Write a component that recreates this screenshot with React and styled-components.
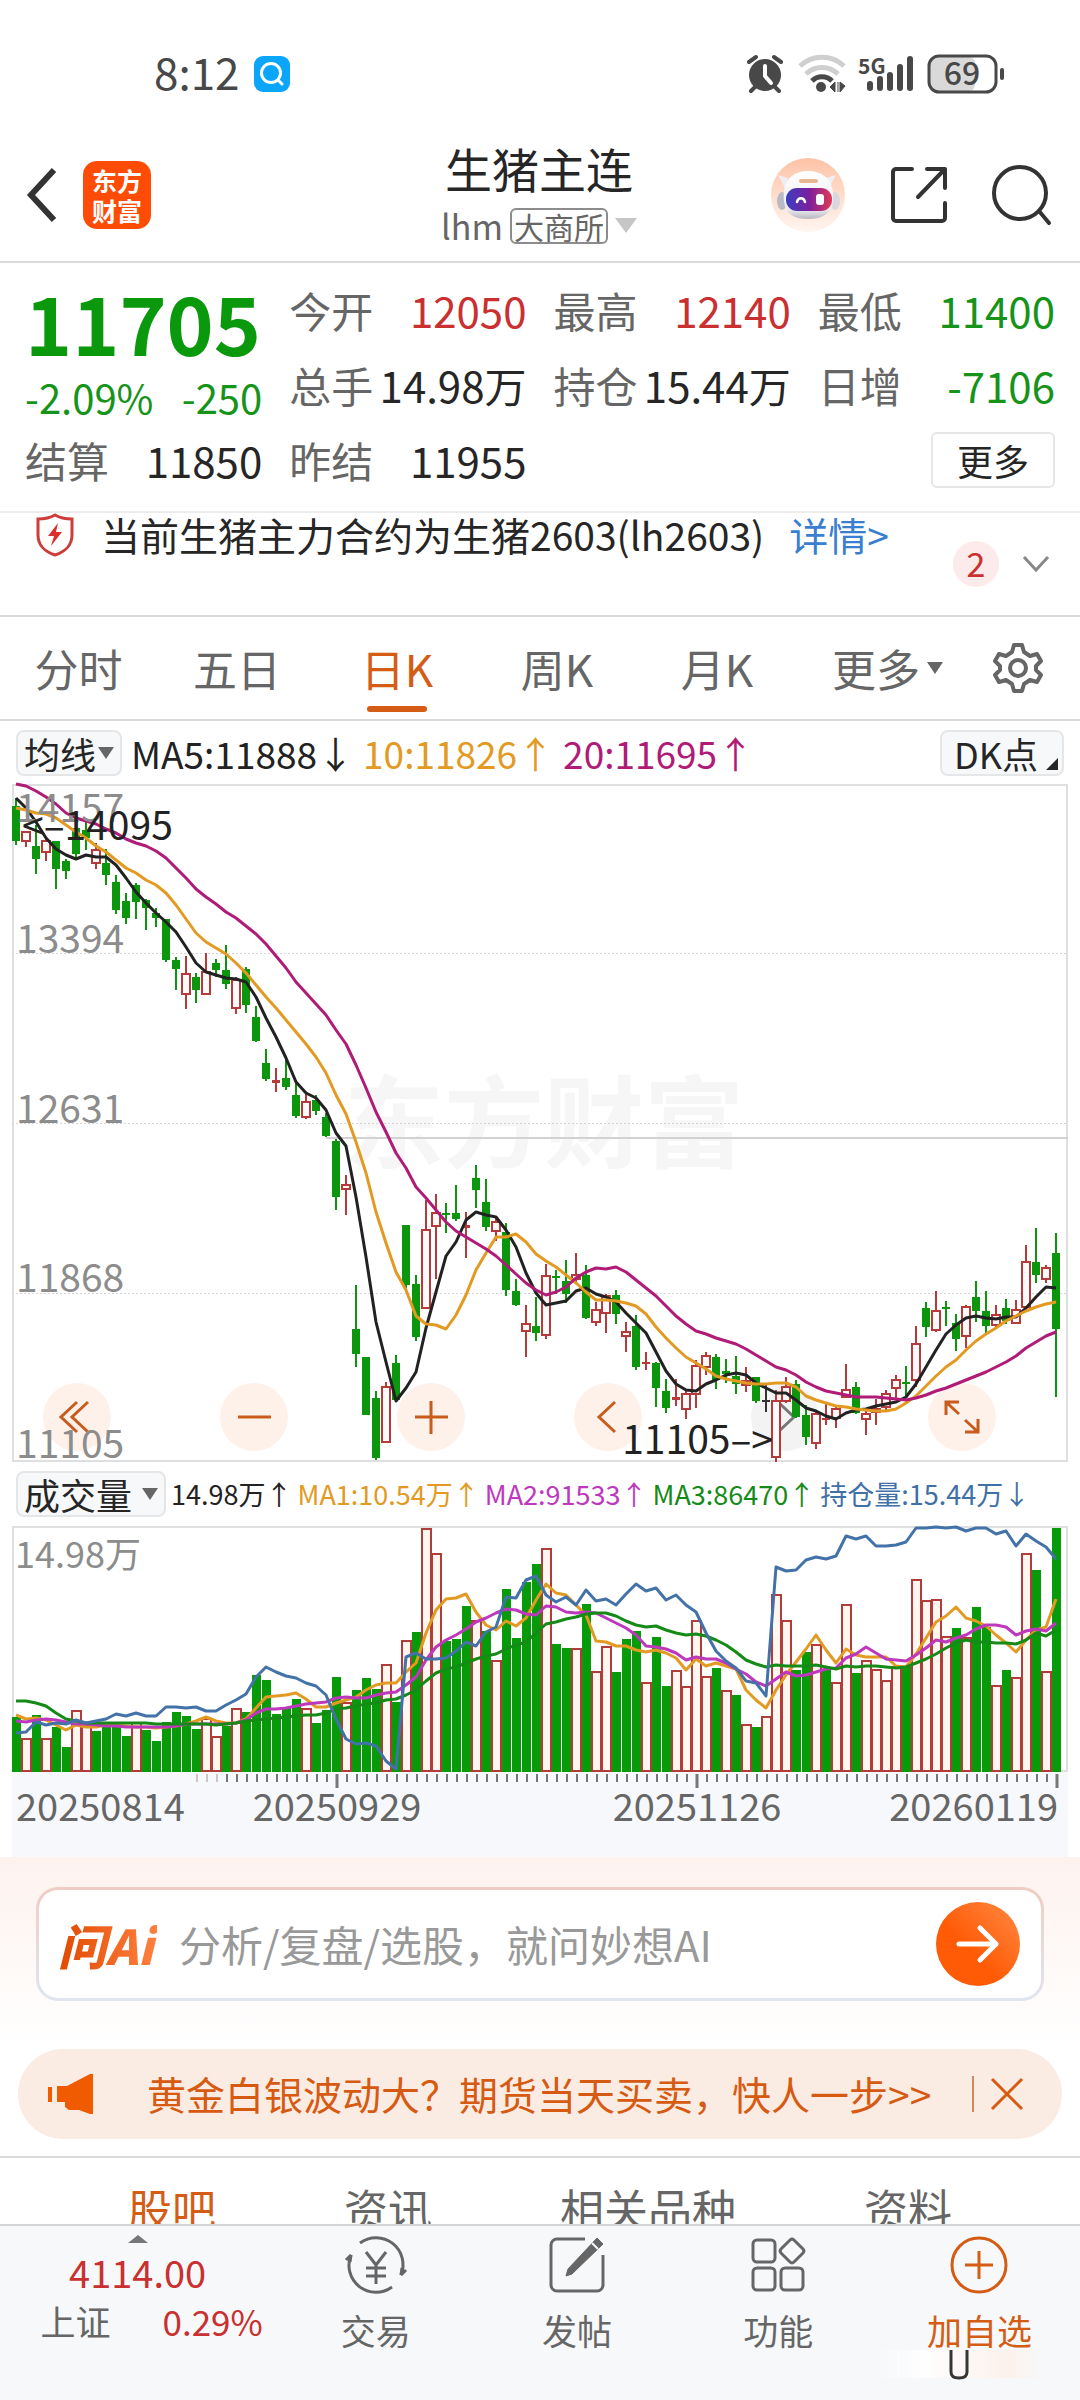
import styled, { createGlobalStyle, css } from 'styled-components';

const GlobalStyle = createGlobalStyle`
  * {
    box-sizing: border-box;
  }

  body {
    margin: 0;
    background: #fff;
    color: #262626;
    font-family: 'Noto Sans CJK SC', 'Noto Sans', sans-serif;
  }

  button {
    padding: 0;
    border: 0;
    background: none;
    color: inherit;
    font: inherit;
    cursor: pointer;
  }

  a {
    color: inherit;
    text-decoration: none;
  }

  svg {
    display: block;
    flex: none;
    overflow: visible;
  }
`;

const colors = {
  up: '#c9302f',
  down: '#16941a',
  text: '#262626',
  muted: '#666',
  orange: '#d55c14',
  line: '#d9dadb',
  soft: '#f6f8fa',
};

const tones = {
  up: colors.up,
  down: colors.down,
  text: colors.text,
};

/* ---------- chart data ---------- */

// [direction, high, body top, body bottom, low], in chart units from the top
const candles = [
  ['g', 14, 22, 57, 61], ['r', 47, 47, 57, 63], ['g', 41, 62, 75, 90], ['r', 53, 56, 68, 77],
  ['g', 57, 57, 85, 105], ['g', 75, 77, 87, 95], ['g', 36, 44, 70, 74], ['g', 36, 46, 54, 66],
  ['r', 59, 65, 79, 85], ['g', 65, 79, 91, 101], ['g', 91, 98, 126, 130], ['g', 109, 117, 134, 140],
  ['g', 99, 101, 118, 135], ['g', 115, 116, 124, 146], ['g', 124, 129, 134, 143], ['g', 135, 135, 176, 178],
  ['g', 173, 176, 185, 206], ['r', 172, 189, 210, 225], ['g', 189, 193, 206, 219], ['r', 169, 187, 210, 210],
  ['g', 175, 179, 186, 193], ['g', 161, 186, 200, 205], ['r', 193, 195, 224, 230], ['g', 183, 185, 221, 229],
  ['g', 222, 233, 257, 258], ['g', 265, 279, 295, 297], ['r', 284, 296, 299, 308], ['g', 276, 294, 303, 306],
  ['g', 296, 311, 332, 334], ['r', 309, 317, 333, 335], ['g', 311, 316, 327, 331], ['g', 329, 333, 352, 353],
  ['g', 355, 357, 413, 426], ['r', 391, 400, 405, 431], ['g', 501, 545, 570, 583], ['g', 573, 573, 631, 631],
  ['g', 607, 614, 674, 676], ['r', 598, 602, 658, 658], ['g', 571, 579, 616, 618], ['g', 441, 441, 501, 504],
  ['g', 491, 500, 553, 557], ['r', 416, 445, 524, 524], ['r', 410, 428, 442, 495], ['g', 419, 429, 431, 449],
  ['g', 401, 429, 435, 437], ['r', 428, 441, 444, 474], ['g', 381, 394, 406, 424], ['g', 395, 418, 443, 447],
  ['r', 433, 437, 447, 457], ['g', 439, 448, 506, 512], ['g', 495, 507, 521, 522], ['r', 521, 539, 547, 573],
  ['g', 513, 542, 549, 557], ['r', 480, 491, 551, 555], ['g', 486, 492, 493, 510], ['g', 476, 497, 510, 519],
  ['r', 469, 490, 495, 498], ['g', 481, 491, 534, 535], ['r', 518, 525, 538, 542], ['r', 510, 511, 529, 549],
  ['g', 506, 511, 530, 540], ['r', 538, 547, 552, 568], ['g', 531, 542, 583, 586], ['r', 568, 578, 580, 586],
  ['g', 578, 579, 604, 623], ['g', 595, 607, 624, 629], ['r', 595, 613, 616, 622], ['r', 605, 609, 625, 635],
  ['r', 576, 581, 610, 624], ['r', 568, 571, 583, 591], ['g', 570, 573, 596, 605], ['g', 575, 587, 590, 599],
  ['g', 572, 592, 600, 610], ['r', 583, 596, 601, 608], ['g', 593, 593, 617, 619], ['k', 599, 616, 617, 628],
  ['r', 606, 616, 673, 678], ['r', 593, 602, 617, 619], ['g', 596, 600, 633, 634], ['g', 621, 631, 653, 661],
  ['r', 626, 629, 659, 665], ['r', 619, 634, 636, 641], ['r', 623, 624, 634, 644], ['r', 580, 605, 613, 613],
  ['g', 598, 603, 629, 630], ['r', 627, 629, 635, 651], ['r', 615, 624, 628, 641], ['r', 606, 609, 623, 626],
  ['r', 591, 595, 604, 616], ['g', 582, 598, 599, 613], ['r', 542, 559, 596, 603], ['g', 518, 524, 543, 553],
  ['r', 507, 526, 546, 548], ['g', 517, 523, 525, 542], ['g', 530, 539, 555, 567], ['r', 521, 522, 552, 564],
  ['g', 497, 513, 527, 538], ['g', 507, 527, 542, 550], ['r', 521, 530, 541, 543], ['g', 515, 524, 537, 540],
  ['r', 516, 525, 539, 540], ['r', 461, 477, 523, 526], ['g', 444, 478, 491, 499], ['r', 481, 483, 495, 499],
  ['g', 449, 469, 545, 613],
];

const ma5 = [
  14, 24, 38, 54, 65, 71, 75, 71, 73, 73, 81, 94, 108, 119, 129, 138, 148, 163, 179, 188, 191, 194, 195, 198, 213,
  234, 253, 274, 298, 309, 314, 326, 349, 362, 413, 473, 538, 578, 617, 604, 588, 544, 508, 472, 458, 436, 428, 431,
  433, 446, 463, 489, 509, 521, 519, 517, 507, 504, 510, 513, 518, 529, 539, 549, 568, 587, 600, 606, 607, 600, 596,
  591, 589, 591, 599, 604, 609, 609, 616, 624, 627, 632, 635, 629, 626, 625, 622, 620, 618, 613, 600, 583, 566, 550,
  541, 534, 532, 534, 535, 533, 533, 524, 513, 503, 504,
];

const ma10 = [
  24, 26, 29, 30, 34, 41, 48, 54, 62, 68, 76, 84, 89, 96, 101, 109, 121, 135, 149, 158, 164, 170, 179, 189, 201, 213,
  224, 236, 248, 260, 273, 289, 311, 330, 358, 389, 428, 459, 488, 506, 532, 540, 541, 545, 531, 511, 486, 469, 453,
  453, 450, 458, 470, 477, 483, 491, 499, 508, 516, 516, 517, 519, 522, 530, 543, 554, 564, 573, 579, 585, 592, 595,
  597, 599, 600, 600, 599, 599, 603, 612, 616, 619, 622, 623, 625, 626, 627, 627, 625, 619, 612, 602, 592, 583, 576,
  566, 557, 550, 544, 537, 532, 527, 523, 520, 518,
];

const ma20 = [
  0, 2, 7, 13, 20, 29, 34, 37, 40, 45, 49, 55, 59, 62, 67, 74, 84, 94, 105, 113, 120, 128, 134, 142, 150, 160, 172,
  184, 198, 209, 220, 231, 246, 260, 281, 304, 328, 348, 369, 384, 403, 414, 426, 438, 447, 453, 459, 465, 472, 481,
  490, 499, 506, 511, 508, 503, 494, 488, 484, 485, 483, 488, 496, 504, 512, 522, 532, 540, 547, 550, 554, 557, 560,
  565, 571, 577, 583, 586, 591, 598, 603, 607, 609, 611, 613, 613, 613, 614, 615, 616, 614, 611, 607, 604, 600, 596,
  592, 588, 583, 578, 572, 564, 558, 552, 548,
];

const volumes = [
  57, 34, 59, 34, 46, 26, 63, 47, 42, 47, 50, 37, 51, 43, 32, 52, 62, 58, 44, 55, 36, 47, 65, 62, 100, 95, 60, 67,
  75, 65, 51, 64, 98, 71, 85, 97, 86, 111, 72, 135, 145, 251, 225, 135, 137, 171, 156, 146, 115, 189, 138, 196, 215,
  230, 132, 128, 127, 174, 103, 129, 103, 137, 146, 92, 139, 89, 104, 88, 156, 98, 107, 84, 80, 49, 46, 57, 183, 156,
  105, 124, 131, 105, 92, 172, 102, 115, 105, 94, 108, 108, 198, 177, 178, 139, 149, 138, 170, 150, 89, 105, 97, 225,
  209, 103, 252,
];

// indexes of the hollow (rising) volume bars
const risingVolumes = new Set([
  1, 3, 6, 7, 12, 19, 20, 22, 29, 33, 37, 39, 41, 42, 46, 48, 53, 56, 58, 59, 63, 66, 67, 68, 69, 71, 73, 75, 76, 77,
  80, 82, 83, 85, 86, 87, 88, 90, 91, 92, 93, 95, 98, 100, 101, 103,
]);

const volumeMa1 = [
  195, 199, 198, 200, 206, 211, 206, 208, 208, 206, 206, 207, 208, 208, 209, 208, 207, 204, 201, 197, 201, 203, 203,
  199, 188, 177, 176, 175, 172, 179, 187, 187, 183, 180, 177, 169, 164, 162, 162, 151, 141, 111, 87, 75, 74, 70, 89,
  102, 107, 98, 103, 95, 76, 60, 69, 71, 82, 92, 119, 120, 124, 124, 128, 130, 128, 131, 136, 149, 137, 145, 142,
  145, 148, 169, 180, 188, 169, 154, 140, 127, 113, 128, 141, 127, 133, 135, 135, 135, 145, 146, 132, 116, 99, 93,
  84, 95, 98, 103, 113, 121, 130, 118, 107, 104, 75,
];

const volumeMa2 = [
  201, 202, 200, 199, 200, 202, 204, 204, 206, 207, 207, 208, 208, 208, 208, 208, 207, 204, 204, 204, 205, 204, 203,
  200, 193, 189, 189, 188, 186, 184, 183, 182, 178, 177, 178, 178, 175, 172, 171, 164, 156, 138, 125, 118, 113, 106,
  99, 95, 90, 86, 87, 91, 92, 83, 84, 89, 90, 89, 90, 95, 100, 105, 113, 124, 125, 127, 131, 138, 135, 137, 137, 142,
  148, 153, 161, 165, 158, 151, 155, 154, 151, 148, 147, 136, 132, 125, 131, 137, 138, 139, 133, 126, 118, 120, 116,
  113, 106, 102, 102, 104, 113, 108, 106, 108, 100,
];

const volumeMa3 = [
  181, 181, 183, 186, 193, 199, 201, 203, 203, 203, 203, 203, 203, 203, 205, 205, 205, 204, 204, 205, 206, 204, 203,
  201, 200, 199, 198, 197, 196, 195, 195, 193, 189, 188, 186, 184, 183, 180, 179, 175, 169, 160, 152, 148, 146, 142,
  137, 134, 132, 127, 123, 120, 111, 101, 99, 96, 94, 91, 90, 90, 93, 98, 102, 104, 103, 107, 110, 113, 112, 114,
  118, 123, 130, 138, 143, 146, 144, 145, 145, 145, 144, 146, 148, 145, 146, 145, 145, 146, 147, 146, 142, 137, 132,
  126, 121, 118, 120, 120, 121, 121, 122, 118, 110, 114, 107,
];

const openInterest = [
  214, 213, 202, 206, 203, 204, 200, 203, 201, 199, 194, 196, 193, 196, 196, 187, 187, 188, 187, 191, 191, 185, 180,
  173, 156, 146, 151, 155, 157, 162, 165, 175, 199, 220, 225, 224, 227, 243, 251, 135, 131, 137, 137, 136, 129, 120,
  124, 109, 104, 73, 74, 56, 52, 71, 79, 73, 82, 66, 77, 75, 82, 70, 60, 67, 64, 76, 71, 82, 89, 110, 129, 139, 147,
  160, 162, 176, 42, 46, 45, 35, 32, 34, 31, 10, 13, 10, 21, 21, 20, 17, 2, 2, 1, 2, 1, 5, 2, 2, 8, 5, 21, 8, 16, 22,
  34,
];

const VOLUME_MAX = 252;
const VOLUME_HEIGHT = 244;

const toX = (i) => 4 + i * 10;
const toVolume = (v) => Math.round((v / VOLUME_MAX) * VOLUME_HEIGHT);
const toPoints = (values, scale = (v) => v) => values.map((v, i) => `${toX(i)},${scale(v)}`).join(' ');

/* ---------- status bar and header ---------- */

const Page = styled.main`
  display: flex;
  flex-direction: column;
  min-height: 100vh;
  overflow-x: hidden;
`;

const StatusBar = styled.div`
  display: flex;
  align-items: center;
  justify-content: space-between;
  height: 112px;
  padding: 36px 74px 0 154px;
  color: #484848;
`;

const StatusGroup = styled.div`
  display: flex;
  align-items: center;
  gap: 14px;
`;

const Clock = styled.time`
  padding-bottom: 6px;
  font-size: 44px;
  line-height: 48px;
`;

const Header = styled.header`
  display: grid;
  grid-template-columns: 1fr auto 1fr;
  align-items: center;
  height: 151px;
  padding: 16px 28px 0 26px;
  border-bottom: 2px solid ${colors.line};
`;

const HeaderSide = styled.div`
  display: flex;
  align-items: center;
  justify-content: ${(p) => (p.$end ? 'flex-end' : 'flex-start')};
  gap: ${(p) => (p.$end ? '44px' : '26px')};
`;

const IconButton = styled.button`
  display: flex;
  align-items: center;
  justify-content: center;
`;

const BrandLogo = styled.a`
  display: flex;
  align-items: center;
  justify-content: center;
  width: 68px;
  height: 68px;
  border-radius: 14px;
  background: #fe4c06;
  color: #fff;
  font-size: 25px;
  font-weight: 700;
  line-height: 30px;
  text-align: center;
`;

const TitleBlock = styled.div`
  text-align: center;
`;

const Title = styled.h1`
  margin: 0;
  font-size: 47px;
  font-weight: 400;
  line-height: 56px;
`;

const SubTitle = styled.button`
  display: inline-flex;
  align-items: center;
  gap: 7px;
  margin-top: 6px;
  color: ${colors.muted};
  font-size: 34px;
  line-height: 48px;
`;

const Exchange = styled.span`
  padding: 0 2px;
  border: 2px solid #8c8c8c;
  border-radius: 6px;
  font-size: 30px;
  line-height: 32px;
`;

const Triangle = styled.span`
  width: 0;
  height: 0;
  border: ${(p) => p.$size || 8}px solid transparent;
  border-bottom-width: 0;
  border-top: ${(p) => (p.$size || 8) + 4}px solid ${(p) => p.$color || '#666'};
`;

/* ---------- quote ---------- */

const Quote = styled.section`
  display: grid;
  grid-template-columns: repeat(4, 1fr);
  grid-auto-rows: 75px;
  column-gap: 27px;
  padding: 9px 25px 14px;
  border-bottom: 2px solid #ececec;
`;

const Price = styled.div`
  grid-row: span 2;
  color: ${colors.down};
`;

const PriceValue = styled.div`
  height: 98px;
  color: #0a980c;
  font-size: 80px;
  font-weight: 700;
  line-height: 98px;
`;

const PriceChange = styled.div`
  display: flex;
  justify-content: space-between;
  font-size: 40px;
  line-height: 54px;
`;

const Stat = styled.dl`
  display: flex;
  align-items: center;
  justify-content: space-between;
  margin: 0;
  font-size: 42px;
  line-height: 60px;
  white-space: nowrap;
`;

const StatLabel = styled.dt`
  color: ${colors.muted};
`;

const StatValue = styled.dd`
  margin: 0;
  color: ${(p) => tones[p.$tone]};
`;

const MoreButton = styled.button`
  grid-column: 4;
  align-self: center;
  justify-self: end;
  width: 124px;
  height: 56px;
  border: 2px solid #e6e6e6;
  border-radius: 6px;
  font-size: 36px;
  line-height: 48px;
`;

const Notice = styled.section`
  display: flex;
  align-items: center;
  height: 104px;
  padding: 0 31px 0 34px;
  border-bottom: 2px solid ${colors.line};
`;

const NoticeText = styled.p`
  display: flex;
  align-self: flex-start;
  gap: 25px;
  flex: 1;
  margin: 0;
  font-size: 39px;
  line-height: 42px;
  white-space: nowrap;
`;

const NoticeLink = styled.a`
  color: #3a7fcf;
`;

const NoticeCount = styled.span`
  width: 46px;
  height: 46px;
  margin-right: 24px;
  border-radius: 50%;
  background: #fdeaea;
  color: ${colors.up};
  font-size: 34px;
  line-height: 44px;
  text-align: center;
`;

/* ---------- period tabs and indicator rows ---------- */

const PeriodTabs = styled.nav`
  display: grid;
  grid-template-columns: 157fr repeat(4, 160fr) 181fr 80fr;
  height: 104px;
  padding-right: 22px;
  border-bottom: 2px solid ${colors.line};
`;

const PeriodTab = styled.button`
  position: relative;
  display: flex;
  align-items: center;
  justify-content: center;
  gap: 7px;
  color: ${colors.muted};
  font-size: 44px;

  ${(p) =>
    p.$active &&
    css`
      color: ${colors.orange};

      &::after {
        content: '';
        position: absolute;
        bottom: 7px;
        left: 50%;
        width: 60px;
        height: 6px;
        margin-left: -30px;
        border-radius: 3px;
        background: ${colors.orange};
      }
    `}
`;

const IndicatorRow = styled.div`
  display: flex;
  align-items: center;
  gap: ${(p) => p.$gap}px;
  height: ${(p) => p.$height}px;
  padding: 0 16px;
  font-size: ${(p) => p.$size}px;
  line-height: 48px;
  white-space: nowrap;
`;

const Picker = styled.button`
  display: flex;
  align-items: center;
  justify-content: center;
  gap: ${(p) => p.$gap || 2}px;
  height: 46px;
  margin-left: ${(p) => (p.$end ? 'auto' : '0')};
  padding: 0 ${(p) => (p.$end ? 12 : 6)}px;
  border: 2px solid #e4e6e8;
  border-radius: 8px;
  background: ${colors.soft};
  font-size: 36px;
  line-height: 42px;
`;

const PickerCorner = styled.span`
  align-self: flex-end;
  margin: 0 -8px 4px 6px;
  border: 6px solid ${colors.text};
  border-top-color: transparent;
  border-left-color: transparent;
`;

const Reading = styled.span`
  color: ${(p) => p.$color};
`;

/* ---------- charts ---------- */

const ChartFrame = styled.div`
  position: relative;
  margin: 0 12px;
`;

const Watermark = styled.div`
  position: absolute;
  top: 41%;
  right: 0;
  left: 8px;
  color: #f6f6f6;
  font-size: 100px;
  font-weight: 700;
  line-height: 110px;
  text-align: center;
`;

const Drawing = styled.svg`
  position: relative;
  width: 100%;
  height: auto;
  pointer-events: none;

  text {
    font-family: 'Noto Sans CJK SC', sans-serif;
  }
`;

const ChartControls = styled.div`
  position: absolute;
  right: 72px;
  bottom: 11px;
  left: 31px;
  display: flex;
  justify-content: space-between;
`;

const ChartControl = styled.button`
  display: flex;
  align-items: center;
  justify-content: center;
  width: 68px;
  height: 68px;
  border-radius: 50%;
  background: ${(p) => (p.disabled ? '#f3f3f3' : '#fef1ea')};
  color: ${(p) => (p.disabled ? '#777' : '#c75c1d')};
`;

const Axis = styled.div`
  margin: 0 12px;
  background: #f7f8fb;
`;

/* ---------- assistant and banner ---------- */

const Assistant = styled.section`
  padding: 30px 36px 48px;
  background: linear-gradient(#fdf2ee, #fff);
`;

const AskBox = styled.form`
  display: flex;
  align-items: center;
  gap: 22px;
  height: 114px;
  padding: 0 21px 0 19px;
  border: 3px solid transparent;
  border-radius: 22px;
  background:
    linear-gradient(#fff, #fff) padding-box,
    linear-gradient(#f0cdc4, #dfe6f0) border-box;
`;

const AskLogo = styled.label`
  padding-right: 4px;
  background: linear-gradient(90deg, #e04a00, #ff8040);
  background-clip: text;
  color: transparent;
  font-size: 48px;
  font-style: italic;
  font-weight: 900;
  line-height: 60px;
`;

const AskInput = styled.input`
  flex: 1;
  min-width: 0;
  padding: 0;
  border: 0;
  outline: 0;
  background: none;
  font: inherit;
  font-size: 42px;
  line-height: 60px;

  &::placeholder {
    color: #999;
    opacity: 1;
  }
`;

const SendButton = styled(IconButton)`
  width: 84px;
  height: 84px;
  border-radius: 50%;
  background: linear-gradient(225deg, #ff8a45, #ff5a05 60%);
`;

const Banner = styled.aside`
  display: flex;
  align-items: center;
  height: 90px;
  margin: 0 18px 17px;
  padding: 0 38px 0 30px;
  border-radius: 45px;
  background: #fbece3;
  color: #d65a12;
`;

const BannerText = styled.a`
  flex: 1;
  margin-left: 53px;
  padding-bottom: 2px;
  font-size: 39px;
  line-height: 50px;
  white-space: nowrap;
`;

const BannerClose = styled(IconButton)`
  height: 36px;
  padding-left: 16px;
  border-left: 2px solid #cf8a5e;
`;

/* ---------- bottom ---------- */

const SectionTabs = styled.nav`
  display: flex;
  justify-content: space-between;
  height: 68px;
  padding: 20px 128px 0;
  border-top: 2px solid ${colors.line};
  overflow: hidden;
`;

const SectionTab = styled.a`
  color: ${(p) => (p.$active ? colors.orange : colors.muted)};
  font-size: 44px;
  line-height: 60px;
`;

const BottomBar = styled.footer`
  position: relative;
  display: grid;
  grid-template-columns: 275fr repeat(4, 201fr);
  flex: 1;
  min-height: 176px;
  border-top: 2px solid #d3d4d6;
  background: ${colors.soft};
`;

const IndexCell = styled.button`
  display: flex;
  flex-direction: column;
  align-items: center;
  padding-top: 9px;
  color: ${colors.up};
  font-size: 38px;
`;

const IndexArrow = styled.span`
  border: 10px solid transparent;
  border-top-width: 0;
  border-bottom: 8px solid #777;
`;

const IndexValue = styled.span`
  margin-top: 3px;
  line-height: 52px;
`;

const IndexChange = styled.span`
  display: flex;
  gap: 52px;
  padding-left: 28px;
  font-size: 35px;
  line-height: 46px;
`;

const IndexName = styled.span`
  color: ${colors.muted};
`;

const NavItem = styled.button`
  display: flex;
  flex-direction: column;
  align-items: center;
  padding-top: 8px;
  color: ${(p) => (p.$accent ? colors.orange : colors.muted)};
  font-size: 35px;
  line-height: 48px;
`;

const NavIcon = styled.span`
  display: flex;
  align-items: center;
  height: 62px;
`;

const NavLabel = styled.span`
  margin-top: 10px;
`;

const HomeHandle = styled.div`
  position: absolute;
  top: 124px;
  right: 38px;
  display: flex;
  justify-content: center;
  width: 166px;
  height: 28px;
  background: linear-gradient(90deg, transparent, #fff 30%, #fdf1ea 80%, transparent);
  opacity: 0.9;
`;

/* ---------- icons ---------- */

const Stroke = ({ size = 48, w = 4, box = 48, children, ...rest }) => (
  <svg
    width={size}
    height={size}
    viewBox={`0 0 ${box} ${box}`}
    fill="none"
    stroke="currentColor"
    strokeWidth={w}
    aria-hidden="true"
    {...rest}>
    {children}
  </svg>
);

function SearchBadge() {
  return (
    <svg width="36" height="36" viewBox="0 0 36 36" aria-hidden="true">
      <rect width="36" height="36" rx="9" fill="#0ba5f9" />
      <g fill="none" stroke="#fff" strokeWidth="3" strokeLinecap="round">
        <circle cx="17" cy="17" r="9.5" />
        <path d="M24 24l4 4" />
      </g>
    </svg>
  );
}

function StatusIcons() {
  return (
    <svg width="260" height="40" viewBox="0 0 260 40" fill="#484848" aria-hidden="true">
      {/* alarm */}
      <circle cx="19" cy="21" r="16" />
      <path
        d="M3 8l7-5M35 8l-7-5M9 33l-4 4M29 33l4 4"
        stroke="#484848"
        strokeWidth="4"
        strokeLinecap="round"
      />
      <path d="M19 12v10l6 7" fill="none" stroke="#fff" strokeWidth="4" strokeLinecap="round" />
      {/* wifi */}
      <g fill="none" strokeWidth="5">
        <path d="M54 12a32 32 0 0 1 44 0" stroke="#cfcfcf" />
        <path d="M60 20a23 23 0 0 1 32 0" stroke="#cfcfcf" />
        <path d="M66 27a14 14 0 0 1 20 0" stroke="#484848" />
      </g>
      <circle cx="75" cy="33" r="5" />
      <path d="M89 28v10l-5-5zM92 28v10M94 28v10l5-6z" stroke="#484848" strokeWidth="1" />
      {/* signal */}
      <text x="112" y="20" fontSize="21" fontWeight="700" fontFamily="Noto Sans CJK SC, sans-serif">
        5G
      </text>
      <g stroke="#484848" strokeWidth="6" strokeLinecap="round">
        <path d="M124 30v4M134 25v9M144 21v13M154 13v21M164 5v29" />
      </g>
      {/* battery */}
      <rect x="183" y="3" width="46" height="34" rx="6" fill="#d9d9d9" />
      <rect x="183" y="2" width="67" height="36" rx="10" fill="none" stroke="#484848" strokeWidth="3" />
      <rect x="254" y="14" width="4" height="12" rx="2" />
      <text
        x="216"
        y="31"
        fontSize="32"
        fontWeight="500"
        textAnchor="middle"
        fontFamily="Noto Sans CJK SC, sans-serif">
        69
      </text>
    </svg>
  );
}

function RobotAvatar() {
  return (
    <svg width="76" height="76" viewBox="0 0 76 76" aria-hidden="true">
      <defs>
        <linearGradient id="halo" x1="0" y1="0" x2="0" y2="1">
          <stop offset="0" stopColor="#fdc3a6" />
          <stop offset="1" stopColor="#fff6f1" />
        </linearGradient>
        <linearGradient id="visor" x1="0" y1="0" x2="1" y2="0">
          <stop offset="0" stopColor="#3a3fc0" />
          <stop offset="0.5" stopColor="#7a1f9e" />
          <stop offset="1" stopColor="#e23a55" />
        </linearGradient>
        <linearGradient id="shell" x1="0" y1="0" x2="0" y2="1">
          <stop offset="0" stopColor="#ffffff" />
          <stop offset="0.8" stopColor="#ecebf1" />
          <stop offset="1" stopColor="#b9b7c1" />
        </linearGradient>
      </defs>
      <circle cx="38" cy="38" r="37" fill="url(#halo)" />
      <path d="M8 18l10 3-3 10zM66 18l-10 3 3 10z" fill="#f1eef2" />
      <ellipse cx="12" cy="44" rx="5" ry="9" fill="#b9bac4" />
      <ellipse cx="65" cy="44" rx="5" ry="9" fill="#d8d6de" />
      <path d="M14 44c-2-20 8-30 24-30s27 10 25 30c-1 12-10 18-25 18s-23-6-24-18z" fill="url(#shell)" />
      <rect x="29" y="22" width="19" height="4" rx="2" fill="#e8b592" />
      <rect x="16" y="31" width="46" height="23" rx="11" fill="url(#visor)" />
      <path d="M27 45c1-5 7-5 8 0" fill="none" stroke="#fff" strokeWidth="2.5" strokeLinecap="round" />
      <rect x="46" y="37" width="8" height="11" rx="3" fill="#fff" />
    </svg>
  );
}

function ShareIcon() {
  return (
    <Stroke size={58} box={58} w={4} stroke="#333" strokeLinecap="round" strokeLinejoin="round">
      <path d="M22 3H6a3 3 0 0 0-3 3v46a3 3 0 0 0 3 3h46a3 3 0 0 0 3-3V37" />
      <path d="M37 3h18v19M55 3L28 31" />
    </Stroke>
  );
}

function GearIcon() {
  return (
    <Stroke size={52} box={52} w={4} stroke="#666" strokeLinejoin="round">
      <path d="M22 3h8l2 7 6 4 7-2 4 7-5 5v4l5 5-4 7-7-2-6 4-2 7h-8l-2-7-6-4-7 2-4-7 5-5v-4l-5-5 4-7 7 2 6-4z" />
      <circle cx="26" cy="26" r="8" />
    </Stroke>
  );
}

function ShieldIcon() {
  return (
    <svg width="42" height="44" viewBox="0 0 42 44" aria-hidden="true">
      <path
        d="M21 2c5 3 11 4 17 4v16c0 10-7 17-17 20C11 39 4 32 4 22V6c6 0 12-1 17-4z"
        fill="none"
        stroke="#cf3d3b"
        strokeWidth="3"
      />
      <path d="M24 10l-10 13h6l-3 10 11-14h-6z" fill="#d9302d" />
    </svg>
  );
}

function MegaphoneIcon() {
  return (
    <svg width="46" height="40" viewBox="0 0 46 40" fill="#f05a00" aria-hidden="true">
      <rect x="0" y="13" width="4" height="15" />
      <path d="M9 12h10L42 0h3v40h-3l-11-4h-10l-4-3v-5H9z" />
    </svg>
  );
}

function TradeIcon() {
  return (
    <Stroke size={64} box={64} w={3}>
      <path d="M16 10A27 27 0 0 1 57 42l5-5" />
      <path d="M57 42l1-7" />
      <path d="M48 54A27 27 0 0 1 7 22l-5 5" />
      <path d="M7 22l-1 7" />
      <path d="M22 19l10 13 10-13M22 35h20M22 43h20M32 32v19" />
    </Stroke>
  );
}

function PostIcon() {
  return (
    <Stroke size={60} box={60} w={3}>
      <path d="M38 4H10a6 6 0 0 0-6 6v40a6 6 0 0 0 6 6h40a6 6 0 0 0 6-6V20" />
      <path d="M50 3l6 6-31 30-6 2 2-7z" fill="currentColor" strokeWidth="1" />
      <path d="M45 8l6 6" stroke="#f6f8fa" strokeWidth="2" />
    </Stroke>
  );
}

function FeatureIcon() {
  return (
    <Stroke size={60} box={60} w={3}>
      <rect x="5" y="5" width="22" height="22" rx="4" />
      <rect x="5" y="33" width="22" height="22" rx="4" />
      <rect x="33" y="33" width="22" height="22" rx="4" />
      <path d="M42 5a3 3 0 0 1 4 0l9 9a3 3 0 0 1 0 4l-9 9a3 3 0 0 1-4 0l-9-9a3 3 0 0 1 0-4z" />
    </Stroke>
  );
}

function AddIcon() {
  return (
    <Stroke size={60} box={60} w={3}>
      <circle cx="30" cy="30" r="27" />
      <path d="M30 16v28M16 30h28" />
    </Stroke>
  );
}

/* ---------- chart drawings ---------- */

const candleColors = { g: '#0c960e', r: '#b63a3a', k: '#333' };

function Candle({ x, data }) {
  const [dir, high, top, bottom, low] = data;
  const color = candleColors[dir];
  const height = bottom - top;
  const hollow = dir === 'r' && height > 3;
  return (
    <g>
      <path d={`M${x} ${high}V${top}M${x} ${bottom}V${low}`} stroke={color} strokeWidth="2" />
      {hollow ? (
        <rect
          x={x - 4}
          y={top + 1}
          width="8"
          height={Math.max(height - 1, 2)}
          fill="#fffafa"
          stroke={color}
          strokeWidth="2"
        />
      ) : (
        <rect x={x - 4} y={top} width="8" height={Math.max(height, 2)} fill={color} />
      )}
    </g>
  );
}

function PriceChart() {
  return (
    <Drawing viewBox="0 0 1056 678" role="img" aria-label="日K">
      <rect x="1" y="1" width="1054" height="676" fill="none" stroke="#dedfe0" strokeWidth="2" />
      <g stroke="#d5d5d5" strokeDasharray="2 2">
        <path d="M0 169.500h1056M0 339.500h1056M0 509.500h1056" />
      </g>
      <path d="M314 354h742" stroke="#d2d2d2" strokeWidth="2" />
      {candles.map((data, i) => (
        <Candle key={i} x={toX(i)} data={data} />
      ))}
      <g fill="none" strokeWidth="3" strokeLinejoin="round">
        <polyline points={toPoints(ma5)} stroke="#222" />
        <polyline points={toPoints(ma10)} stroke="#e39a22" />
        <polyline points={toPoints(ma20)} stroke="#b01b78" />
      </g>
      <g fontSize="39" fill="#8c8c8c">
        <text x="4" y="38">14157</text>
        <text x="4" y="169">13394</text>
        <text x="4" y="339">12631</text>
        <text x="4" y="508">11868</text>
        <text x="4" y="674">11105</text>
      </g>
      <g fontSize="39" fill="#222">
        <text x="10" y="56">&lt;–14095</text>
        <text x="761" y="670" textAnchor="end">11105–&gt;</text>
      </g>
    </Drawing>
  );
}

function VolumeChart() {
  return (
    <Drawing viewBox="0 0 1056 246" role="img" aria-label="成交量">
      <rect x="1" y="1" width="1054" height="244" fill="none" stroke="#dedfe0" strokeWidth="2" />
      {volumes.map((v, i) => {
        const h = toVolume(v);
        return risingVolumes.has(i) ? (
          <rect
            key={i}
            x={toX(i) - 4}
            y={246 - h}
            width="9"
            height={h - 1}
            fill="#fff6f0"
            stroke="#b23c3a"
            strokeWidth="2"
          />
        ) : (
          <rect key={i} x={toX(i) - 4} y={246 - h} width="9" height={h} fill="#079b09" />
        );
      })}
      <g fill="none" strokeWidth="3" strokeLinejoin="round">
        <polyline points={toPoints(volumeMa1, toVolume)} stroke="#e39a22" />
        <polyline points={toPoints(volumeMa2, toVolume)} stroke="#bd38bd" />
        <polyline points={toPoints(volumeMa3, toVolume)} stroke="#158a17" />
        <polyline points={toPoints(openInterest, toVolume)} stroke="#4272a8" />
      </g>
      <text x="3" y="42" fontSize="36" fill="#8c8c8c">
        14.98万
      </text>
    </Drawing>
  );
}

const majorTicks = [32, 68, 104];

function DateAxis() {
  return (
    <Drawing viewBox="0 0 1056 85" role="img" aria-label="日期">
      {volumes.map((_, i) => {
        if (i < 18) return null;
        const major = majorTicks.includes(i);
        return (
          <path
            key={i}
            d={`M${toX(i) + 1} 2v${major ? 14 : 8}`}
            stroke={i < 21 ? '#cfc4c4' : '#777'}
            strokeWidth={major ? 3 : 2}
          />
        );
      })}
      <g fontSize="38" fill="#666">
        <text x="4" y="49">20250814</text>
        <text x="325" y="49" textAnchor="middle">20250929</text>
        <text x="685" y="49" textAnchor="middle">20251126</text>
        <text x="1046" y="49" textAnchor="end">20260119</text>
      </g>
    </Drawing>
  );
}

/* ---------- content ---------- */

const stats = [
  { label: '今开', value: '12050', tone: 'up' },
  { label: '最高', value: '12140', tone: 'up' },
  { label: '最低', value: '11400', tone: 'down' },
  { label: '总手', value: '14.98万', tone: 'text' },
  { label: '持仓', value: '15.44万', tone: 'text' },
  { label: '日增', value: '-7106', tone: 'down' },
  { label: '结算', value: '11850', tone: 'text' },
  { label: '昨结', value: '11955', tone: 'text' },
];

const periods = ['分时', '五日', '日K', '周K', '月K'];

const priceReadings = [
  { text: 'MA5:11888↓', color: '#222' },
  { text: '10:11826↑', color: '#e39a22' },
  { text: '20:11695↑', color: '#b01b78' },
];

const volumeReadings = [
  { text: '14.98万↑', color: '#222' },
  { text: 'MA1:10.54万↑', color: '#e39a22' },
  { text: 'MA2:91533↑', color: '#bd38bd' },
  { text: 'MA3:86470↑', color: '#158a17' },
  { text: '持仓量:15.44万↓', color: '#3f70a6' },
];

const controls = [
  { label: '最左', path: 'M26 11L10 26l16 15M37 11L21 26l16 15' },
  { label: '缩小', path: 'M10 26h33' },
  { label: '放大', path: 'M10 26h33M26 10v33' },
  { label: '左移', path: 'M33 11L17 26l16 15' },
  { label: '右移', path: 'M19 11l16 15-16 15', disabled: true },
  { label: '全屏', path: 'M10 24V11h13M10 11l13 12M42 28v13H29M42 41L29 29' },
];

const sections = ['股吧', '资讯', '相关品种', '资料'];

const navItems = [
  { label: '交易', icon: <TradeIcon /> },
  { label: '发帖', icon: <PostIcon /> },
  { label: '功能', icon: <FeatureIcon /> },
  { label: '加自选', icon: <AddIcon />, accent: true },
];

export default function App() {
  return (
    <Page>
      <GlobalStyle />
      <StatusBar>
        <StatusGroup>
          <Clock>8:12</Clock>
          <SearchBadge />
        </StatusGroup>
        <StatusIcons />
      </StatusBar>

      <Header>
        <HeaderSide>
          <IconButton aria-label="返回">
            <svg width="31" height="54" viewBox="0 0 31 54" fill="none" stroke="#333" strokeWidth="6">
              <path d="M28 2L5 27l23 25" />
            </svg>
          </IconButton>
          <BrandLogo href="#home">
            东方
            <br />
            财富
          </BrandLogo>
        </HeaderSide>
        <TitleBlock>
          <Title>生猪主连</Title>
          <SubTitle>
            lhm
            <Exchange>大商所</Exchange>
            <Triangle $size={11} $color="#c6c6c6" />
          </SubTitle>
        </TitleBlock>
        <HeaderSide $end>
          <IconButton aria-label="助手">
            <RobotAvatar />
          </IconButton>
          <IconButton aria-label="分享">
            <ShareIcon />
          </IconButton>
          <IconButton aria-label="搜索">
            <Stroke size={60} box={60} w={4} stroke="#333" strokeLinecap="round">
              <circle cx="28" cy="28" r="26" />
              <path d="M47 46l10 12" />
            </Stroke>
          </IconButton>
        </HeaderSide>
      </Header>

      <Quote>
        <Price>
          <PriceValue>11705</PriceValue>
          <PriceChange>
            <span>-2.09%</span>
            <span>-250</span>
          </PriceChange>
        </Price>
        {stats.map((s) => (
          <Stat key={s.label}>
            <StatLabel>{s.label}</StatLabel>
            <StatValue $tone={s.tone}>{s.value}</StatValue>
          </Stat>
        ))}
        <MoreButton>更多</MoreButton>
      </Quote>

      <Notice>
        <NoticeText>
          <ShieldIcon />
          <span>当前生猪主力合约为生猪2603(lh2603)</span>
          <NoticeLink href="#detail">详情&gt;</NoticeLink>
        </NoticeText>
        <NoticeCount>2</NoticeCount>
        <IconButton aria-label="展开">
          <svg width="26" height="16" viewBox="0 0 26 16" fill="none" stroke="#888" strokeWidth="3">
            <path d="M1 1l12 13L25 1" />
          </svg>
        </IconButton>
      </Notice>

      <PeriodTabs>
        {periods.map((name) => (
          <PeriodTab key={name} $active={name === '日K'}>
            {name}
          </PeriodTab>
        ))}
        <PeriodTab>
          更多
          <Triangle $color="#666" />
        </PeriodTab>
        <IconButton aria-label="设置">
          <GearIcon />
        </IconButton>
      </PeriodTabs>

      <IndicatorRow $height={63} $gap={9} $size={37}>
        <Picker>
          均线
          <Triangle />
        </Picker>
        {priceReadings.map((r) => (
          <Reading key={r.text} $color={r.color}>
            {r.text}
          </Reading>
        ))}
        <Picker $end>
          DK点
          <PickerCorner />
        </Picker>
      </IndicatorRow>

      <ChartFrame>
        <Watermark>东方财富</Watermark>
        <ChartControls>
          {controls.map((c) => (
            <ChartControl key={c.label} aria-label={c.label} disabled={c.disabled}>
              <Stroke size={52} box={52} w={3}>
                <path d={c.path} />
              </Stroke>
            </ChartControl>
          ))}
        </ChartControls>
        <PriceChart />
      </ChartFrame>

      <IndicatorRow $height={64} $gap={5} $size={27}>
        <Picker $gap={10}>
          成交量
          <Triangle />
        </Picker>
        {volumeReadings.map((r) => (
          <Reading key={r.text} $color={r.color}>
            {r.text}
          </Reading>
        ))}
      </IndicatorRow>

      <ChartFrame>
        <VolumeChart />
      </ChartFrame>
      <Axis>
        <DateAxis />
      </Axis>

      <Assistant>
        <AskBox>
          <AskLogo htmlFor="ask">问Ai</AskLogo>
          <AskInput id="ask" placeholder="分析/复盘/选股，就问妙想AI" />
          <SendButton type="button" aria-label="发送">
            <Stroke size={44} box={44} w={5} stroke="#fff" strokeLinecap="round" strokeLinejoin="round">
              <path d="M3 22h37M24 6l16 16-16 16" />
            </Stroke>
          </SendButton>
        </AskBox>
      </Assistant>

      <Banner>
        <MegaphoneIcon />
        <BannerText href="#promo">黄金白银波动大？期货当天买卖，快人一步&gt;&gt;</BannerText>
        <BannerClose aria-label="关闭">
          <Stroke size={34} box={34} w={3}>
            <path d="M2 2l30 30M32 2L2 32" />
          </Stroke>
        </BannerClose>
      </Banner>

      <SectionTabs>
        {sections.map((name, i) => (
          <SectionTab key={name} href={`#section-${i}`} $active={i === 0}>
            {name}
          </SectionTab>
        ))}
      </SectionTabs>

      <BottomBar>
        <IndexCell>
          <IndexArrow />
          <IndexValue>4114.00</IndexValue>
          <IndexChange>
            <IndexName>上证</IndexName>
            0.29%
          </IndexChange>
        </IndexCell>
        {navItems.map((item) => (
          <NavItem key={item.label} $accent={item.accent}>
            <NavIcon>{item.icon}</NavIcon>
            <NavLabel>{item.label}</NavLabel>
          </NavItem>
        ))}
        <HomeHandle>
          <svg width="22" height="30" viewBox="0 0 22 30" fill="none" stroke="#222" strokeWidth="3">
            <path d="M3 0v22q0 6 8 6t8-6V0" />
          </svg>
        </HomeHandle>
      </BottomBar>
    </Page>
  );
}
